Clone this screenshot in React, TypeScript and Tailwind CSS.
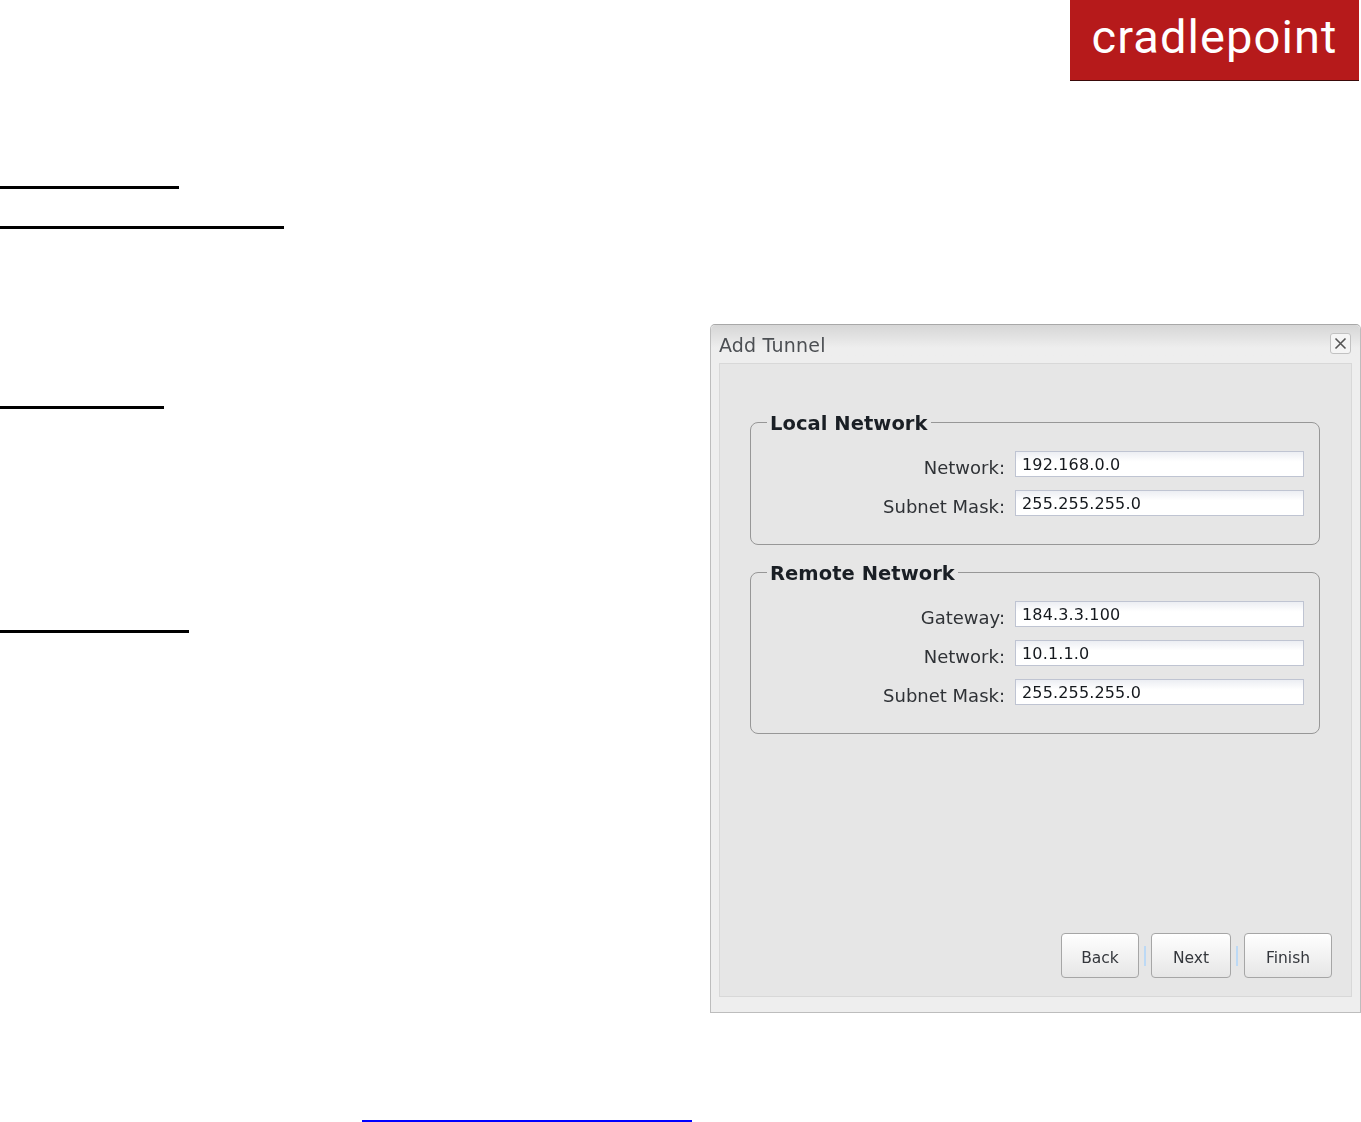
const dialogFont = "font-['DejaVu_Sans',sans-serif]";

function Rule({ width, top, color = 'bg-black', height = 'h-[3px]' }: { width: string; top: string; color?: string; height?: string }) {
  return <div className={`${height} ${width} ${top} ${color}`} />;
}

function Field({ label, value }: { label: string; value: string }) {
  return (
    <div className="flex items-start h-[26px]">
      <label className="w-[255px] text-right text-[18px] leading-[34px] text-[#2f3236] pr-[10px]">{label}</label>
      <input
        readOnly
        defaultValue={value}
        className="w-[289px] h-[26px] border border-[#bfc4d2] bg-gradient-to-b from-[#eceef3] to-white to-40% px-[6px] text-[16px] tracking-[0.15px] text-[#14181d] outline-none"
      />
    </div>
  );
}

function Group({ title, children }: { title: string; children: React.ReactNode }) {
  return (
    <fieldset className="border border-[#979797] rounded-[8px] pl-[9px] pb-[28px] min-w-0">
      <legend className="ml-[7px] px-[3px] pt-[4px] text-[19.5px] leading-[22px] font-bold text-[#1a1f25] tracking-[0.05px]">{title}</legend>
      <div className="flex flex-col gap-[13px] pt-[16px]">{children}</div>
    </fieldset>
  );
}

function WizardButton({ label, width }: { label: string; width: string }) {
  return (
    <button className={`${width} h-[45px] pt-[6px] border border-[#a6a6a6] rounded-[4px] bg-gradient-to-b from-white to-[#e6e6e6] text-[15.5px] text-[#34373c]`}>
      {label}
    </button>
  );
}

function ButtonSeparator({ margin }: { margin: string }) {
  return <div className={`w-[2px] h-[20px] bg-[#bcd9f5] ${margin}`} />;
}

function AddTunnelDialog() {
  return (
    <div className={`w-[651px] h-[689px] flex flex-col border border-[#bdbdbd] border-t-[#a8a8a8] rounded-t-[5px] bg-[#eeeeee] blur-[0.4px] ${dialogFont}`}>
      <div className="h-[38px] flex items-center justify-between pl-[8px] pr-[9px] rounded-t-[5px] bg-gradient-to-b from-[#d6d6d6] to-[#eeeeee] to-60%">
        <span className="text-[19px] text-[#4c4f53] mt-[3px] tracking-[0.2px]">Add Tunnel</span>
        <button className="w-[21px] h-[21px] -mt-[2px] border border-[#c2c2c2] rounded-[3px] bg-[#f5f5f5] flex items-center justify-center">
          <svg width="13" height="13" viewBox="0 0 13 13" fill="none" stroke="#555555" strokeWidth="1.6">
            <path d="M1.5 1.5l10 10M11.5 1.5l-10 10" />
          </svg>
        </button>
      </div>

      <div className="flex-1 flex flex-col ml-[8px] mr-[8px] mb-[15px] border border-[#d8d8d8] bg-[#e6e6e6] pl-[30px] pr-[31px] pt-[45px]">
        <div className="flex flex-col gap-[14px]">
          <Group title="Local Network">
            <Field label="Network:" value="192.168.0.0" />
            <Field label="Subnet Mask:" value="255.255.255.0" />
          </Group>
          <Group title="Remote Network">
            <Field label="Gateway:" value="184.3.3.100" />
            <Field label="Network:" value="10.1.1.0" />
            <Field label="Subnet Mask:" value="255.255.255.0" />
          </Group>
        </div>

        <div className="mt-auto mb-[18px] -mr-[12px] flex items-center justify-end">
          <WizardButton label="Back" width="w-[78px]" />
          <ButtonSeparator margin="mx-[5px]" />
          <WizardButton label="Next" width="w-[80px]" />
          <ButtonSeparator margin="ml-[5px] mr-[6px]" />
          <WizardButton label="Finish" width="w-[88px]" />
        </div>
      </div>
    </div>
  );
}

export default function App() {
  return (
    <div className="w-[1361px] h-[1122px] bg-white flex flex-col overflow-hidden">
      <div className="flex justify-end pr-[2px]">
        <div className="w-[289px] h-[81px] bg-[#b61a1b] border-b border-[#3a0a0a] flex items-center justify-center overflow-hidden">
          <span className="font-['Roboto',sans-serif] font-normal text-[47px] leading-none text-white tracking-[1.1px] -mt-[7px]">cradlepoint</span>
        </div>
      </div>

      <Rule width="w-[179px]" top="mt-[105px]" />
      <Rule width="w-[284px]" top="mt-[37px]" />

      <div className="flex mt-[95px]">
        <div className="w-[710px] flex flex-col">
          <Rule width="w-[164px]" top="mt-[82px]" />
          <Rule width="w-[189px]" top="mt-[221px]" />
        </div>
        <AddTunnelDialog />
      </div>

      <Rule width="w-[330px]" top="mt-auto ml-[362px]" color="bg-[#0000ff]" height="h-[2px]" />
    </div>
  );
}
